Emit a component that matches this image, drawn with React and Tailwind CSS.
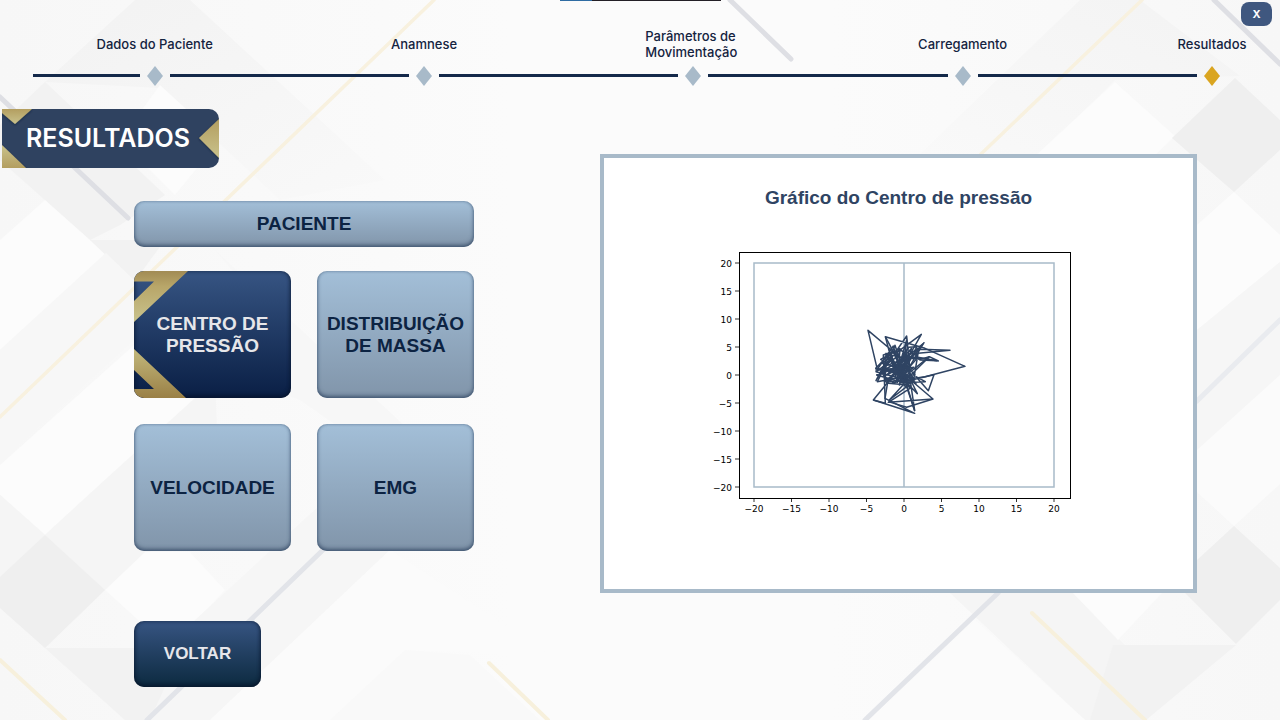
import React from "react";

const steps = [
  { label: "Dados do Paciente", grow: "grow-[130]" },
  { label: "Anamnese", grow: "grow-[263]" },
  { label: "Parâmetros de Movimentação", grow: "grow-[263]" },
  { label: "Carregamento", grow: "grow-[263]" },
  { label: "Resultados", grow: "grow-[243]", current: true },
];

const ticks = [-20, -15, -10, -5, 0, 5, 10, 15, 20];

const tickText = (v) => (v < 0 ? `−${-v}` : `${v}`);

function Backdrop() {
  return (
    <svg
      className="absolute inset-0 -z-10 h-full w-full"
      viewBox="0 0 1280 720"
      preserveAspectRatio="xMidYMid slice"
      aria-hidden="true"
    >
      <defs>
        <linearGradient id="wash" x1="0" x2="1" y1="0" y2="0">
          <stop offset="0" stopColor="#f7f7f7" />
          <stop offset="0.4" stopColor="#fbfbfb" />
          <stop offset="0.65" stopColor="#fbfbfb" />
          <stop offset="1" stopColor="#f7f7f7" />
        </linearGradient>
        <linearGradient id="fadeL" x1="0" x2="1" y1="0" y2="1">
          <stop offset="0" stopColor="#f2f2f2" />
          <stop offset="1" stopColor="#f9f9f9" />
        </linearGradient>
        <linearGradient id="fadeR" x1="1" x2="0" y1="0" y2="1">
          <stop offset="0" stopColor="#f3f3f3" />
          <stop offset="1" stopColor="#f9f9f9" />
        </linearGradient>
      </defs>
      <rect width="1280" height="720" fill="url(#wash)" />
      <path d="M135 0H190L385 180L280 200L160 88L45 82Z" fill="url(#fadeL)" />
      <path d="M45 82L165 195L120 225L90 240L45 200L0 160V125Z" fill="#f2f2f2" />
      <path d="M160 85L220 140L175 195L120 140Z" fill="#fcfcfc" />
      <path d="M45 200L90 240L106 253L0 350V240Z" fill="#fcfcfc" />
      <path d="M90 240H165L134 282Z" fill="#f2f2f2" />
      <path d="M106 253L134 280H240L215 250L420 440L400 470L300 400L134 340L0 462V350Z" fill="#f7f7f7" />
      <path d="M0 465L134 345L215 380L105 480L45 535L0 495Z" fill="#fcfcfc" />
      <path d="M105 480L215 380L220 500L150 552L105 590L45 535Z" fill="#f5f5f5" />
      <path d="M0 495L45 535L0 577Z" fill="#f5f5f5" />
      <path d="M0 577L45 535L105 590L45 648L0 608Z" fill="#efefef" />
      <path d="M45 648H140L200 720H125Z" fill="#f2f2f2" />
      <path d="M145 552H190L225 590L190 628L160 640L105 590Z" fill="#fcfcfc" />
      <path d="M195 620L320 505L390 550L210 720H150Z" fill="#f6f6f6" />
      <path d="M390 550L550 655L405 650L330 720H210Z" fill="#fbfbfb" />
      <path d="M405 650L470 655L540 720H330Z" fill="#f9f9f9" />
      <path d="M1080 0H1140L1240 76L1115 80L1040 154H920Z" fill="url(#fadeR)" />
      <path d="M1115 82L1175 136L1140 170H1020Z" fill="#fcfcfc" />
      <path d="M1235 78L1280 120V150L1234 192L1172 138Z" fill="#efefef" />
      <path d="M1234 192L1280 235V262L1197 330V225Z" fill="#fcfcfc" />
      <path d="M1197 330L1280 262V375L1197 450Z" fill="#f6f6f6" />
      <path d="M1197 450L1280 375V484L1234 526L1197 492Z" fill="#fbfbfb" />
      <path d="M1234 526L1280 568V600L1236 644L1185 593L1197 560Z" fill="#efefef" />
      <path d="M950 593H1073L1130 650L1146 720H1085Z" fill="#f5f5f5" />
      <path d="M1073 593H1162L1118 640Z" fill="#fcfcfc" />
      <path d="M1113 645H1236L1146 720H1090Z" fill="#f2f2f2" />
      <path d="M975 620L1085 720H870Z" fill="#fbfbfb" />
      <g fill="none" strokeLinecap="round">
        <path d="M434 0L0 417M1142 0L981 154" stroke="#f8f1df" strokeWidth="3.5" />
        <path d="M0 660L65 720M489 663L548 720M1032 613L1145 720" stroke="#f7f0dc" strokeWidth="4" />
        <path d="M0 97L128 218M730 0L791 59M1214 0L1280 64" stroke="#dedfe4" strokeWidth="5" />
        <path d="M325 548L147 720M998 593L865 720" stroke="#e2e4e9" strokeWidth="5" />
        <path d="M1280 320L1197 401" stroke="#e9ebef" strokeWidth="5" />
      </g>
    </svg>
  );
}

function Stepper() {
  return (
    <ol className="flex items-end gap-[7px] pt-7 pr-[60px] pl-[33px] font-['Inter',sans-serif] text-[13px]/4 font-medium text-[#14233f]">
      {steps.map((s) => (
        <li key={s.label} className={`flex basis-0 items-end gap-[7px] ${s.grow}`}>
          <span className="mb-[9px] h-[3px] grow bg-[#14294a]" />
          <span className="flex w-4 shrink-0 flex-col items-center gap-1.5">
            <span className="flex min-h-8 w-32 items-center justify-center">
              <span className={s.label.length > 20 ? "w-24" : "whitespace-nowrap"}>{s.label}</span>
            </span>
            <svg className="h-5 w-4" viewBox="0 0 16 20" aria-hidden="true">
              <path d="M8 0L16 10L8 20L0 10Z" fill={s.current ? "#daa520" : "#a8bac9"} />
            </svg>
          </span>
        </li>
      ))}
    </ol>
  );
}

function Banner() {
  return (
    <div className="relative ml-0.5 flex h-[59px] w-[217px] items-center overflow-hidden rounded-r-[10px] bg-[#2f4260] pl-6">
      <svg className="absolute inset-0 h-full w-full" viewBox="0 0 217 59" aria-hidden="true">
        <defs>
          <linearGradient id="goldBanner" x1="0" x2="0" y1="0" y2="1">
            <stop offset="0" stopColor="#b39e60" />
            <stop offset="1" stopColor="#c9c28c" />
          </linearGradient>
          <linearGradient id="goldBase" x1="0" x2="0" y1="0" y2="1">
            <stop offset="0" stopColor="#c9c28c" />
            <stop offset="1" stopColor="#b39e60" />
          </linearGradient>
          <filter id="soft" x="-20%" y="-20%" width="140%" height="140%">
            <feDropShadow dx="0" dy="1" stdDeviation="1" floodColor="#101c30" floodOpacity="0.6" />
          </filter>
        </defs>
        <g filter="url(#soft)">
          <path d="M0 0H30L13 15L0 4Z" fill="url(#goldBanner)" />
          <path d="M217 10L197 29L217 49Z" fill="url(#goldBanner)" />
          <path d="M0 36L24 59H0Z" fill="url(#goldBase)" />
        </g>
      </svg>
      <h1 className="relative font-['Inter',sans-serif] text-[25px] font-semibold text-white">RESULTADOS</h1>
    </div>
  );
}

const light =
  "bg-linear-to-b from-[#a3bfd8] to-[#8195aa] text-[#0c2342] shadow-[inset_0_-2px_4px_rgba(30,50,80,0.6),inset_0_0_3px_rgba(40,70,100,0.4)]";
const dark =
  "bg-linear-to-b from-[#375583] text-[#e6e6ea] shadow-[inset_0_-2px_4px_rgba(5,15,35,0.6),inset_0_0_4px_rgba(10,25,50,0.6)]";

function Tile({ children }) {
  return (
    <button type="button" className={`h-[127px] rounded-[10px] text-[19px]/[22px] font-bold ${light}`}>
      {children}
    </button>
  );
}

function ActiveTile({ children }) {
  return (
    <button
      type="button"
      className={`relative h-[127px] overflow-hidden rounded-[10px] px-4 text-[19px]/[22px] font-bold to-[#0a1f45] ${dark}`}
    >
      <svg className="absolute top-0 left-0 h-full w-14" viewBox="0 0 56 127" aria-hidden="true">
        <defs>
          <linearGradient id="goldTop" x1="0" x2="0" y1="0" y2="1">
            <stop offset="0" stopColor="#a18b54" />
            <stop offset="0.3" stopColor="#b8a669" />
            <stop offset="1" stopColor="#c9c38d" />
          </linearGradient>
          <linearGradient id="goldBottom" x1="0" x2="0" y1="0" y2="1">
            <stop offset="0" stopColor="#c2b87c" />
            <stop offset="1" stopColor="#9a8046" />
          </linearGradient>
        </defs>
        <path d="M0 0H54L0 51V30L20 10.500H0Z" fill="url(#goldTop)" />
        <path d="M0 78L52 127H0V118H20L0 99Z" fill="url(#goldBottom)" />
      </svg>
      <span className="relative">{children}</span>
    </button>
  );
}

const px = (v) => 192 + v * 7.5;
const py = (v) => 127 - v * 5.6;

function PressureChart() {
  return (
    <svg className="h-[268px] w-[364px] max-w-full" viewBox="0 0 364 268" role="img" aria-label="Centro de pressão">
      <path d="M42 15H342V239H42ZM192 15V239" fill="none" stroke="#a8bbc9" strokeWidth="1.500" />
      <g transform="translate(148 72) scale(0.3333)" fill="none" stroke="#2f4463" strokeWidth="4.500" strokeLinejoin="round">
        <path d="M130 120L24 31L52 148L100 78L130 180L90 100L48 182L140 48L150 150L66 130L184 43L132 135L164 180L62 118L120 86L112 187L76 50L195 85L315 139L195 170L80 187L188 72L105 140L152 110L235 123L208 110L140 165L47 145L98 92L146 200L105 76L92 110L128 190" />
        <path d="M180 88L270 91L150 102L50 165L135 190L78 100L76 185L176 90L160 185L48 155L112 110L182 118L208 110L132 185L222 164L205 212L168 170L196 185L120 188L192 68L142 130L136 80L164 272L130 170L52 185L98 95L70 105L76 250L40 240L118 145L150 205L85 247L219 237L152 180L172 221L138 185L88 240L140 200" />
        <path d="M40 240L164 280L75 235L85 175L102 190L135 160L150 120L108 150L140 175L70 140L126 120L105 165L165 165L136 135L80 165L155 85L118 195L145 105L100 130L168 190L115 150L130 110L155 175L92 155L145 150L115 130L143 195L85 190L64 155L162 142L110 178L125 145L150 190L76 50" />
        <path d="M85 245L140 262L219 237M112 120L120 90L132 96L125 140L60 160L94 115L110 140L146 82L170 80L162 100L180 120L230 122L174 112L108 187L152 142L46 150M146 140L122 175L136 200L160 180M164 272L120 130L140 60L128 170" />
      </g>
      <rect x="27" y="4" width="331" height="246" fill="none" stroke="#000" strokeWidth="1" shapeRendering="crispEdges" />
      <g className="font-['DejaVu_Sans',sans-serif] text-[9px]" fill="#000">
        {ticks.map((v) => (
          <g key={v}>
            <path d={`M23 ${py(v)}H27M${px(v)} 250V254`} stroke="#000" strokeWidth="0.8" />
            <text x="20" y={py(v) + 4} textAnchor="end">{tickText(v)}</text>
            <text x={px(v)} y="264" textAnchor="middle">{tickText(v)}</text>
          </g>
        ))}
      </g>
    </svg>
  );
}

export default function App() {
  return (
    <div className="relative isolate min-h-screen overflow-hidden font-['Liberation_Sans',Arial,sans-serif]">
      <Backdrop />
      <div className="absolute inset-x-0 top-0 flex justify-center" aria-hidden="true">
        <span className="h-px w-8 bg-[#2f6ca3]" />
        <span className="h-px w-[129px] bg-[#231f26]" />
      </div>
      <button
        type="button"
        aria-label="X"
        className="absolute top-0.5 right-2 h-6 w-[31px] rounded-lg bg-[#3f577f] font-['Inter',sans-serif] text-[11px] font-bold text-white"
      >
        X
      </button>

      <header>
        <Stepper />
      </header>

      <main className="flex items-start pt-[23px] pr-[83px]">
        <section className="shrink-0">
          <Banner />
          <nav className="mt-[33px] ml-[134px] flex w-[340px] flex-col items-start">
            <button type="button" className={`h-[46px] w-full rounded-[10px] text-[19px]/[22px] font-bold ${light}`}>
              PACIENTE
            </button>
            <div className="mt-6 grid w-full grid-cols-2 gap-[26px]">
              <ActiveTile>CENTRO DE PRESSÃO</ActiveTile>
              <Tile>DISTRIBUIÇÃO DE MASSA</Tile>
              <Tile>VELOCIDADE</Tile>
              <Tile>EMG</Tile>
            </div>
            <button
              type="button"
              className={`mt-[70px] h-[66px] w-[127px] rounded-[10px] text-[17px] font-bold to-[#0c2a40] ${dark}`}
            >
              VOLTAR
            </button>
          </nav>
        </section>

        <section className="mt-[45px] ml-[126px] flex min-w-0 grow flex-col items-center border-4 border-[#a8bac9] bg-white pt-6 pb-[73px]">
          <h2 className="text-[19px]/8 font-bold text-[#2f4463]">Gráfico do Centro de pressão</h2>
          <div className="mt-[34px] flex w-full justify-center pr-2.5">
            <PressureChart />
          </div>
        </section>
      </main>
    </div>
  );
}
